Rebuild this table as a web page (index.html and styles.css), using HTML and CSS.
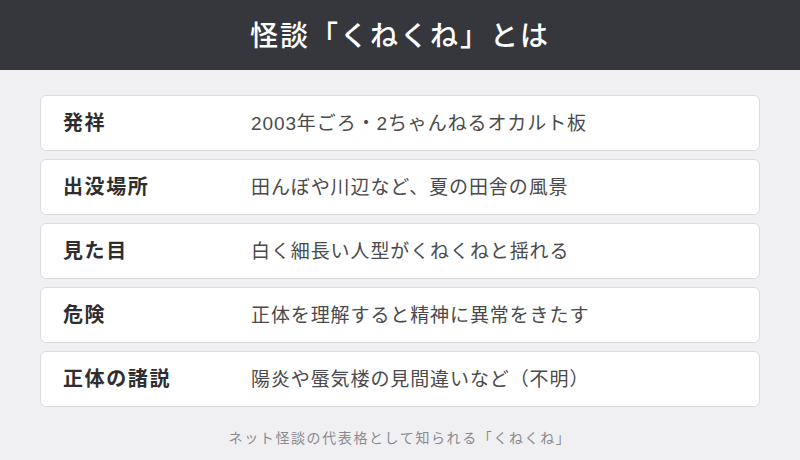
FILE: index.html
```html
<!DOCTYPE html>
<html>
    <head>
        <meta charset="utf-8">
        <title>くねくね</title>
        <link rel="stylesheet" href="styles.css">
    </head>
    <body>
    <div class="header">怪談「くねくね」とは</div>
    <div class="list">
        <div class="row"><div class="label">発祥</div><div class="value">2003年ごろ・2ちゃんねるオカルト板</div></div>
        <div class="row"><div class="label">出没場所</div><div class="value">田んぼや川辺など、夏の田舎の風景</div></div>
        <div class="row"><div class="label">見た目</div><div class="value">白く細長い人型がくねくねと揺れる</div></div>
        <div class="row"><div class="label">危険</div><div class="value">正体を理解すると精神に異常をきたす</div></div>
        <div class="row"><div class="label">正体の諸説</div><div class="value">陽炎や蜃気楼の見間違いなど（不明）</div></div>
    </div>
    <div class="note">ネット怪談の代表格として知られる「くねくね」</div>
    </body>
</html>
```

FILE: styles.css
```css
body{
    margin: 0;
    background: #f0f0f2;
    font-family: "Liberation Sans", "Noto Sans CJK JP", sans-serif;
    color: #333;
}
.header{
    height: 67px;
    padding-bottom: 3px;
    background: #36373c;
    color: #fff;
    font-size: 28px;
    font-weight: 500;
    display: flex;
    align-items: center;
    justify-content: center;
    letter-spacing: 2px;
}
.list{
    display: flex;
    flex-direction: column;
    gap: 8px;
    margin: 25px 40px 0;
}
.row{
    height: 50px;
    padding-bottom: 4px;
    background: #fff;
    border: 1px solid #dcdce0;
    border-radius: 6px;
    display: flex;
    align-items: center;
    padding-left: 22px;
}
.label{
    width: 188px;
    font-size: 20px;
    font-weight: 700;
    letter-spacing: 1.6px;
    color: #2e2e30;
}
.value{
    font-size: 19px;
    letter-spacing: 0.9px;
    color: #4a4a4c;
}
.note{
    text-align: center;
    margin-top: 20px;
    font-size: 14px;
    letter-spacing: 1.6px;
    color: #8a8a8e;
}
```
